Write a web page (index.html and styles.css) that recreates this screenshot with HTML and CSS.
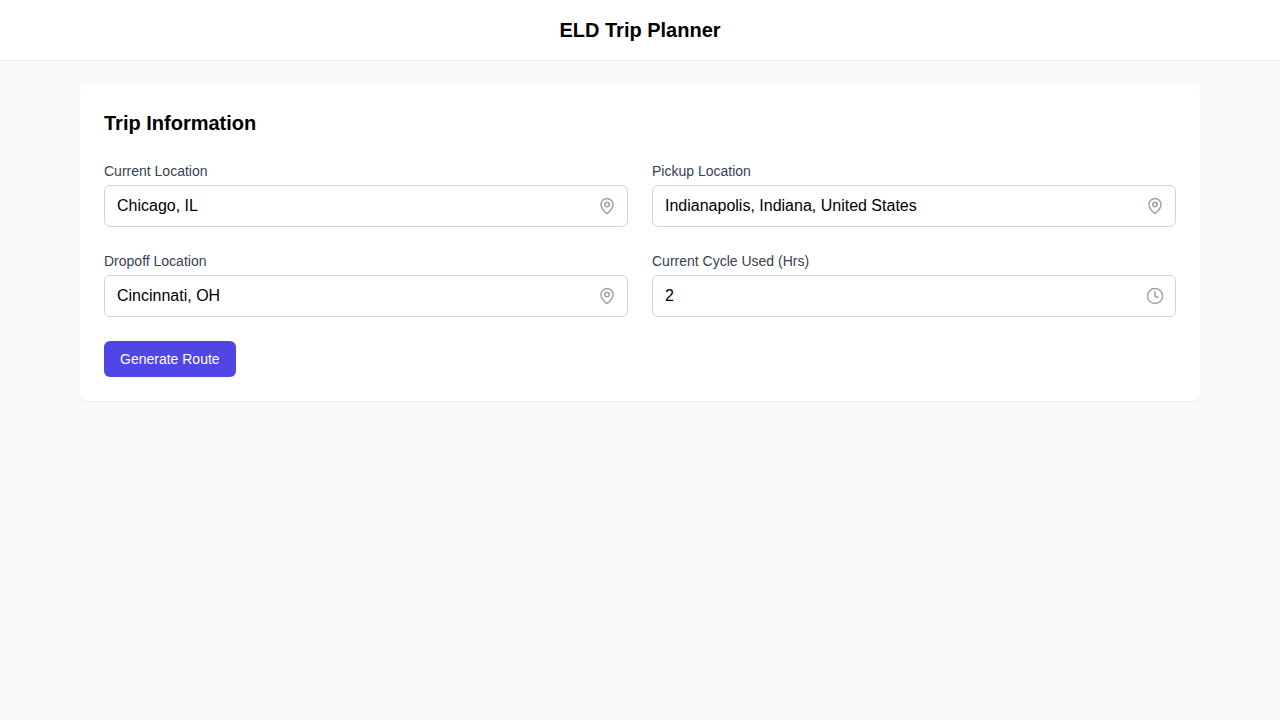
FILE: index.html
```html
<!DOCTYPE html>
<html lang="en">
<head>
  <meta charset="utf-8">
  <meta name="viewport" content="width=device-width, initial-scale=1">
  <title>ELD Trip Planner</title>
  <link rel="stylesheet" href="styles.css">
</head>
<body>
  <svg class="sprite" aria-hidden="true">
    <symbol id="pin" viewBox="0 0 24 24">
      <path d="M20 10c0 4.993-5.539 10.193-7.399 11.799a1 1 0 0 1-1.202 0C9.539 20.193 4 14.993 4 10a8 8 0 0 1 16 0"/>
      <circle cx="12" cy="10" r="3"/>
    </symbol>
    <symbol id="clock" viewBox="0 0 24 24">
      <circle cx="12" cy="12" r="10"/>
      <polyline points="12 6 12 12 16 14"/>
    </symbol>
  </svg>
  <header class="topbar">
    <h1 class="title">ELD Trip Planner</h1>
  </header>
  <main class="container">
    <section class="card">
      <h2 class="card-title">Trip Information</h2>
      <form class="form">
        <div class="grid">
          <div class="field">
            <label class="label" for="current">Current Location</label>
            <div class="control">
              <input class="input" id="current" type="text" value="Chicago, IL">
              <svg class="icon" aria-hidden="true"><use href="#pin"/></svg>
            </div>
          </div>
          <div class="field">
            <label class="label" for="pickup">Pickup Location</label>
            <div class="control">
              <input class="input" id="pickup" type="text" value="Indianapolis, Indiana, United States">
              <svg class="icon" aria-hidden="true"><use href="#pin"/></svg>
            </div>
          </div>
          <div class="field">
            <label class="label" for="dropoff">Dropoff Location</label>
            <div class="control">
              <input class="input" id="dropoff" type="text" value="Cincinnati, OH">
              <svg class="icon" aria-hidden="true"><use href="#pin"/></svg>
            </div>
          </div>
          <div class="field">
            <label class="label" for="cycle">Current Cycle Used (Hrs)</label>
            <div class="control">
              <input class="input" id="cycle" type="number" value="2">
              <svg class="icon" aria-hidden="true"><use href="#clock"/></svg>
            </div>
          </div>
        </div>
        <button class="button" type="button">Generate Route</button>
      </form>
    </section>
  </main>
</body>
</html>
```
FILE: styles.css
```css
* {
  box-sizing: border-box;
}

body {
  margin: 0;
  background: #f9fafb;
  color: #000;
  font-family: "Liberation Sans", Arial, sans-serif;
  font-size: 16px;
  line-height: 24px;
}

.sprite {
  display: none;
}

.topbar {
  padding: 16px;
  border-bottom: 1px solid #e5e7eb;
  background: #fff;
  text-align: center;
}

.title,
.card-title {
  margin: 0;
  font-size: 20px;
  font-weight: 700;
  line-height: 28px;
}

.container {
  max-width: 1152px;
  margin: 0 auto;
  padding: 24px 16px;
}

.card {
  padding: 24px;
  border-radius: 8px;
  background: #fff;
  box-shadow: 0 1px 2px rgba(0, 0, 0, 0.05);
}

.card-title {
  margin-bottom: 24px;
}

.grid {
  display: grid;
  grid-template-columns: repeat(2, minmax(0, 1fr));
  gap: 24px;
  margin-bottom: 24px;
}

.label {
  display: block;
  margin-bottom: 4px;
  color: #374151;
  font-size: 14px;
  line-height: 20px;
}

.control {
  position: relative;
}

.input {
  display: block;
  width: 100%;
  padding: 8px 40px 8px 12px;
  border: 1px solid #d1d5db;
  border-radius: 6px;
  background: #fff;
  color: #000;
  font: inherit;
  appearance: textfield;
}

.icon {
  position: absolute;
  top: 0;
  right: 12px;
  bottom: 0;
  width: 18px;
  height: 18px;
  margin: auto 0;
  fill: none;
  stroke: #9ca3af;
  stroke-width: 2;
  stroke-linecap: round;
  stroke-linejoin: round;
  pointer-events: none;
}

.button {
  display: block;
  padding: 8px 16px;
  border: 0;
  border-radius: 6px;
  background: #4f46e5;
  color: #fff;
  font: inherit;
  font-size: 14px;
  line-height: 20px;
  cursor: pointer;
}
```
